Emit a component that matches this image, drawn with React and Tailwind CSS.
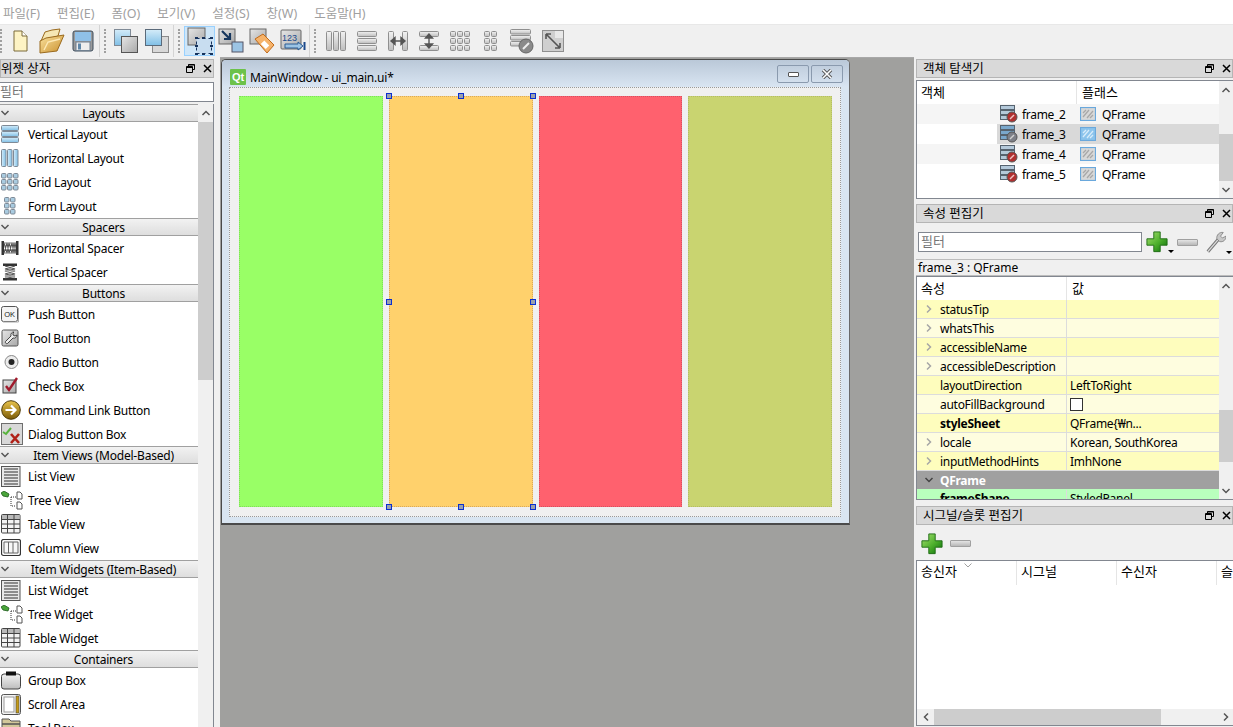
const font = { fontFamily: '"Noto Sans", "Noto Sans CJK KR", sans-serif' };

function Defs() {
  return (
    <svg className="block h-0 w-0">
      <defs>
        <linearGradient id="blueBar" x1="0" y1="0" x2="0" y2="1">
          <stop offset="0" stopColor="#d5ecf9" />
          <stop offset="1" stopColor="#7fbfe6" />
        </linearGradient>
        <linearGradient id="blueBarH" x1="0" y1="0" x2="1" y2="0">
          <stop offset="0" stopColor="#d5ecf9" />
          <stop offset="1" stopColor="#7fbfe6" />
        </linearGradient>
        <linearGradient id="grayBox" x1="0" y1="0" x2="1" y2="1">
          <stop offset="0" stopColor="#e6e6e6" />
          <stop offset="1" stopColor="#a8a8a8" />
        </linearGradient>
        <linearGradient id="grayBar" x1="0" y1="0" x2="0" y2="1">
          <stop offset="0" stopColor="#f2f2f2" />
          <stop offset="1" stopColor="#bdbdbd" />
        </linearGradient>
        <linearGradient id="gold" x1="0" y1="0" x2="0" y2="1">
          <stop offset="0" stopColor="#e9c34a" />
          <stop offset="1" stopColor="#7a5a08" />
        </linearGradient>
        <linearGradient id="folder" x1="0" y1="0" x2="1" y2="1">
          <stop offset="0" stopColor="#fbe3a0" />
          <stop offset="1" stopColor="#c98f2c" />
        </linearGradient>
        <linearGradient id="green" x1="0" y1="0" x2="1" y2="1">
          <stop offset="0" stopColor="#a8e070" />
          <stop offset="0.55" stopColor="#4caf2c" />
          <stop offset="1" stopColor="#0b6b0b" />
        </linearGradient>
      </defs>
    </svg>
  );
}

const Ico = ({ size = 18, w, h, vb = '0 0 18 18', children }) => (
  <svg width={w || size} height={h || size} viewBox={vb} className="block shrink-0">
    {children}
  </svg>
);

// palette icons
const VLayoutIcon = () => (
  <Ico>
    {[1, 7, 13].map((y) => (
      <rect key={y} x="0.5" y={y - 0.5} width="17" height="5" rx="1" fill="url(#blueBar)" stroke="#7f8a96" />
    ))}
  </Ico>
);
const HLayoutIcon = () => (
  <Ico>
    {[1, 7, 13].map((x) => (
      <rect key={x} x={x - 0.5} y="0.5" width="4.5" height="17" rx="1" fill="url(#blueBarH)" stroke="#7f8a96" />
    ))}
  </Ico>
);
const GridIcon = ({ cols = [1, 7, 13], rows = [1, 7, 13], fill = '#a9cbe0', stroke = '#7f8a96' }) => (
  <Ico>
    {rows.map((y) =>
      cols.map((x) => <rect key={x + '-' + y} x={x - 0.5} y={y - 0.5} width="4.5" height="4.5" rx="1" fill={fill} stroke={stroke} />)
    )}
  </Ico>
);
const SpringH = () => (
  <Ico>
    <rect x="0.5" y="2" width="2.5" height="14" fill="#333" />
    <rect x="15" y="2" width="2.5" height="14" fill="#333" />
    <path d="M3 4l3 10 2-10 3 10 2-10 2 10M3 14l3-10 2 10 3-10 2 10 2-10" fill="none" stroke="#555" strokeWidth="1.1" />
    <path d="M3 4h12M3 14h12" stroke="#777" />
  </Ico>
);
const SpringV = () => (
  <Ico>
    <rect x="2" y="0.5" width="14" height="2.5" fill="#333" />
    <rect x="2" y="15" width="14" height="2.5" fill="#333" />
    <path d="M4 3l10 3-10 2 10 3-10 2 10 2M14 3L4 6l10 2-10 3 10 2-10 2" fill="none" stroke="#555" strokeWidth="1.1" />
  </Ico>
);
const OkIcon = () => (
  <Ico>
    <rect x="0.5" y="1.5" width="16" height="15" rx="2" fill="#f4f4f4" stroke="#555" />
    <path d="M17.5 3v14H2" stroke="#aaa" fill="none" />
    <text x="8.5" y="12" textAnchor="middle" fontSize="7.5" fontFamily="Liberation Sans" fill="#222">OK</text>
  </Ico>
);
const ToolBtnIcon = () => (
  <Ico>
    <rect x="1" y="1" width="16" height="16" rx="1.5" fill="url(#grayBox)" stroke="#555" />
    <path d="M13 3a3 3 0 00-3 4L4.500 12.500a1.500 1.500 0 002 2L12 9a3 3 0 004-3l-2 1-2-1 0-2z" fill="#eee" stroke="#333" strokeWidth="0.9" />
  </Ico>
);
const RadioIcon = () => (
  <Ico>
    <circle cx="10.5" cy="9" r="6.5" fill="#ececec" stroke="#8a8a8a" />
    <circle cx="10.5" cy="9" r="3" fill="#222" />
  </Ico>
);
const CheckIcon = () => (
  <Ico>
    <rect x="2" y="3" width="13" height="13" fill="url(#grayBox)" stroke="#444" />
    <path d="M5 9l3 4 8-12" fill="none" stroke="#a01a2c" strokeWidth="2.4" />
  </Ico>
);
const LinkIcon = () => (
  <Ico w={20} h={20} vb="0 0 20 20">
    <circle cx="10" cy="10" r="9.3" fill="url(#gold)" stroke="#4d3a06" />
    <path d="M4.500 10h9M10 5.500l4.500 4.500-4.500 4.500" fill="none" stroke="#fff" strokeWidth="2.2" />
  </Ico>
);
const DialogIcon = () => (
  <Ico w={22} h={22} vb="0 0 22 22">
    <rect x="0.5" y="0.5" width="21" height="21" fill="#d8d8d8" stroke="#6e6e6e" />
    <path d="M2 9l3 2 5-6" fill="none" stroke="#57b33c" strokeWidth="2" />
    <path d="M10 11l8 9M18 11l-8 9" stroke="#b02018" strokeWidth="2.6" />
  </Ico>
);
const ListIcon = () => (
  <Ico w={20} h={21} vb="0 0 20 21">
    <rect x="0.5" y="0.5" width="18.5" height="20" fill="#e8e8e8" stroke="#555" />
    {[3, 6, 9, 12, 15, 18].map((y) => (
      <rect key={y} x="3" y={y - 1} width="14" height="2" fill="#8c8c8c" />
    ))}
  </Ico>
);
const TreeIcon = () => (
  <Ico w={22} h={19} vb="0 0 22 19">
    <path d="M0 2l3-2 5 3-1 3-5-1z" fill="#4aa53a" stroke="#1d5a1a" strokeWidth="0.8" />
    <path d="M10 6h5M10 6v9h5" fill="none" stroke="#333" strokeDasharray="1 1" />
    <path d="M16 1h3l2 2v5h-5zM16 11h3l2 2v5h-5z" fill="#fff" stroke="#555" />
  </Ico>
);
const TableIcon = () => (
  <Ico w={20} h={20} vb="0 0 20 20">
    <rect x="0.5" y="0.5" width="18.5" height="18.5" rx="1" fill="#f3f3f3" stroke="#444" />
    <rect x="1" y="1" width="17.5" height="4" fill="#b9b9b9" />
    <path d="M1 5.500h18M1 10h18M1 14.500h18M6.500 1v18M13 1v18" stroke="#444" />
  </Ico>
);
const ColumnIcon = () => (
  <Ico w={20} h={18} vb="0 0 20 18">
    <rect x="0.5" y="0.5" width="19" height="16" rx="2" fill="#f7f7f7" stroke="#333" strokeWidth="1.2" />
    <path d="M3 3v11h14V3zM7.500 3v11M12 3v11" fill="none" stroke="#666" />
  </Ico>
);
const GroupIcon = () => (
  <Ico w={20} h={19} vb="0 0 20 19">
    <rect x="0.5" y="3" width="19" height="15" rx="2.5" fill="url(#grayBar)" stroke="#444" />
    <rect x="5" y="0.5" width="10" height="4" fill="#111" />
  </Ico>
);
const ScrollIcon = () => (
  <Ico w={20} h={21} vb="0 0 20 21">
    <rect x="0.5" y="0.5" width="19" height="20" rx="2" fill="#f4f4f4" stroke="#555" />
    <rect x="3" y="3" width="10" height="15" fill="#fff" stroke="#999" />
    <rect x="15" y="2" width="3" height="17" fill="#c49a18" stroke="#444" strokeWidth="0.6" />
  </Ico>
);
const ToolBoxIcon = () => (
  <Ico w={20} h={20} vb="0 0 20 20">
    <path d="M1 1h7l2 2h9v3H1zM1 6h18v4H1zM1 10h18v8H1z" fill="#d2c79a" stroke="#555" />
  </Ico>
);

const palette = [
  { title: 'Layouts', items: [['Vertical Layout', VLayoutIcon], ['Horizontal Layout', HLayoutIcon], ['Grid Layout', GridIcon], ['Form Layout', () => <GridIcon cols={[4, 10]} />]] },
  { title: 'Spacers', items: [['Horizontal Spacer', SpringH], ['Vertical Spacer', SpringV]] },
  { title: 'Buttons', items: [['Push Button', OkIcon], ['Tool Button', ToolBtnIcon], ['Radio Button', RadioIcon], ['Check Box', CheckIcon], ['Command Link Button', LinkIcon], ['Dialog Button Box', DialogIcon]] },
  { title: 'Item Views (Model-Based)', items: [['List View', ListIcon], ['Tree View', TreeIcon], ['Table View', TableIcon], ['Column View', ColumnIcon]] },
  { title: 'Item Widgets (Item-Based)', items: [['List Widget', ListIcon], ['Tree Widget', TreeIcon], ['Table Widget', TableIcon]] },
  { title: 'Containers', items: [['Group Box', GroupIcon], ['Scroll Area', ScrollIcon], ['Tool Box', ToolBoxIcon]] },
];

// toolbar icons
const NewIcon = () => (
  <Ico w={15} h={22} vb="0 0 15 22">
    <path d="M1 1h8l5 5v15H1z" fill="#fdf3c4" stroke="#7a6a3a" />
    <path d="M9 1v5h5" fill="#fff" stroke="#7a6a3a" />
  </Ico>
);
const OpenIcon = () => (
  <Ico w={26} h={26} vb="0 0 26 26">
    <path d="M2 13l4-9 7-2 8-1-2 7z" fill="#f6e7b4" stroke="#9a6a1e" />
    <path d="M1 25V13l6-3 18-3-7 16z" fill="url(#folder)" stroke="#9a6a1e" />
    <path d="M5 22l4-8 12-3" fill="none" stroke="#fde9b6" strokeWidth="1.4" />
  </Ico>
);
const SaveIcon = () => (
  <Ico w={22} h={22} vb="0 0 22 22">
    <rect x="1" y="1" width="20" height="20" rx="2" fill="#9a9a9a" stroke="#3c4c5c" />
    <rect x="3" y="2" width="16" height="9" fill="#8fc0e8" />
    <rect x="4" y="12" width="14" height="8.5" fill="#eeeeee" stroke="#6f7f8f" />
    <rect x="6" y="13.5" width="3" height="6" fill="#5e86a8" />
  </Ico>
);
const StackIcon = ({ front }) => (
  <Ico w={26} h={26} vb="0 0 26 26">
    {front ? (
      <>
        <rect x="8.5" y="8.5" width="16" height="16" fill="#d8d8d8" stroke="#8a8a8a" />
        <rect x="1.5" y="1.5" width="16" height="16" fill="url(#blueBar)" stroke="#5a6a7a" />
      </>
    ) : (
      <>
        <rect x="1.5" y="1.5" width="16" height="16" fill="url(#blueBar)" stroke="#7f8a96" />
        <rect x="8.5" y="8.5" width="16" height="16" fill="url(#grayBox)" stroke="#555" />
      </>
    )}
  </Ico>
);
const EditWidgetsIcon = () => (
  <Ico w={26} h={28} vb="0 0 26 28">
    <rect x="1" y="1" width="17" height="17" fill="url(#grayBox)" stroke="#666" />
    <rect x="9.5" y="11.5" width="15" height="15" fill="#c8ddf0" stroke="#16325c" strokeDasharray="3 3" />
    {[[8, 10], [15, 10], [23, 10], [8, 18], [23, 18], [8, 26], [15, 26], [23, 26]].map(([x, y]) => (
      <rect key={x + '-' + y} x={x} y={y} width="3" height="2" fill="#16325c" />
    ))}
  </Ico>
);
const SignalIcon = () => (
  <Ico w={26} h={26} vb="0 0 26 26">
    <rect x="1" y="1" width="16" height="15" fill="url(#grayBox)" stroke="#666" />
    <rect x="14" y="14" width="11" height="10" fill="#9cc4e4" stroke="#556" />
    <path d="M4 3l8 8M12 5v6H6" fill="none" stroke="#17375e" strokeWidth="2.2" />
  </Ico>
);
const BuddyIcon = () => (
  <Ico w={26} h={26} vb="0 0 26 26">
    <rect x="1" y="1" width="16" height="15" fill="url(#grayBox)" stroke="#666" />
    <path d="M6 11l8-5 11 11-7 8z" fill="#f6b36a" stroke="#c06a1a" />
    <rect x="13" y="14" width="7" height="5" fill="#fff" transform="rotate(45 16 16)" />
  </Ico>
);
const TabOrderIcon = () => (
  <Ico w={26} h={24} vb="0 0 26 24">
    <rect x="1" y="1" width="20" height="19" rx="1" fill="url(#grayBox)" stroke="#666" />
    <text x="2" y="12" fontSize="9" fontFamily="Liberation Sans" fill="#1c4a8c">123</text>
    <path d="M5 15h13v-2l5 4-5 4v-2H5z" fill="#9cc4e4" stroke="#2c5c94" />
    <rect x="23.5" y="13" width="2" height="8" fill="#1c4a8c" />
  </Ico>
);

const g = { fill: 'url(#grayBar)', stroke: '#8f8f8f' };
const GrayCols = () => (
  <Ico w={20} h={20} vb="0 0 20 20">
    {[0.5, 7.5, 14.5].map((x) => <rect key={x} x={x} y="0.5" width="5" height="19" rx="1" {...g} />)}
  </Ico>
);
const GrayRows = () => (
  <Ico w={20} h={20} vb="0 0 20 20">
    {[0.5, 7.5, 14.5].map((y) => <rect key={y} x="0.5" y={y} width="19" height="5" rx="1" {...g} />)}
  </Ico>
);
const GraySplitH = () => (
  <Ico w={20} h={20} vb="0 0 20 20">
    <rect x="0.5" y="0.5" width="5" height="19" rx="1" {...g} />
    <rect x="14.5" y="0.5" width="5" height="19" rx="1" {...g} />
    <path d="M3 10h14M3 10l4-3.500v7zM17 10l-4-3.500v7z" fill="#555" stroke="#555" strokeWidth="1.4" />
  </Ico>
);
const GraySplitV = () => (
  <Ico w={20} h={20} vb="0 0 20 20">
    <rect x="0.5" y="0.5" width="19" height="5" rx="1" {...g} />
    <rect x="0.5" y="14.5" width="19" height="5" rx="1" {...g} />
    <path d="M10 3v14M10 3L6.500 7h7zM10 17l-3.500-4h7z" fill="#555" stroke="#555" strokeWidth="1.4" />
  </Ico>
);
const GraySquares = ({ cols }) => (
  <Ico w={20} h={20} vb="0 0 20 20">
    {[0.5, 7.5, 14.5].map((y) => cols.map((x) => <rect key={x + '-' + y} x={x} y={y} width="5" height="5" rx="1" {...g} />))}
  </Ico>
);
const BreakIcon = () => (
  <Ico w={24} h={25} vb="0 0 24 25">
    {[0.5, 6.5, 12.5].map((y) => <rect key={y} x="0.5" y={y} width="20" height="4.5" rx="1" {...g} />)}
    <circle cx="16" cy="17" r="7" fill="#8a8a8a" stroke="#666" />
    <path d="M13 20l6-6" stroke="#eee" strokeWidth="2" />
  </Ico>
);
const AdjustIcon = () => (
  <Ico w={22} h={22} vb="0 0 22 22">
    <rect x="0.5" y="0.5" width="21" height="21" fill="#cfcfcf" stroke="#8f8f8f" />
    <rect x="13" y="1" width="8" height="7" fill="#e8e8e8" />
    <path d="M4 4l14 14M4 4h5M4 4v5M18 18h-5M18 18v-5" fill="none" stroke="#555" strokeWidth="1.6" />
  </Ico>
);

const ToolBtn = ({ active, children }) => (
  <div className={`flex h-[30px] w-[31px] items-center justify-center border ${active ? 'border-[#99d1ff] bg-[#cfe6f8]' : 'border-transparent'}`}>
    {children}
  </div>
);

function ToolGroup({ first, items, activeIndex, last }) {
  return (
    <div className={`flex h-full items-center ${first ? 'pl-0' : 'pl-[4px]'} pr-[1px] ${last ? '' : 'border-r border-[#d4d4d4]'}`}>
      <div className={`h-[24px] w-[2px] border-l-2 border-dotted border-[#a0a0a0] ${first ? 'mr-[3px]' : 'mr-[4px]'}`} />
      {items.map((It, i) => (
        <ToolBtn key={i} active={i === activeIndex}>
          <It />
        </ToolBtn>
      ))}
    </div>
  );
}

const FloatIcon = () => (
  <Ico w={9} h={9} vb="0 0 9 9">
    <path d="M2.500 2.500V.5h6v5h-2M.5 2.500h6v6h-6z" fill="none" stroke="#000" />
    <path d="M2.500 1h6M.5 3.500h6" stroke="#000" />
  </Ico>
);
const CloseIcon = () => (
  <Ico w={9} h={9} vb="0 0 9 9">
    <path d="M1 1l7 7M8 1L1 8" stroke="#000" strokeWidth="1.5" />
  </Ico>
);

function DockTitle({ children, pad = 'pl-[6px]' }) {
  return (
    <div className={`flex h-[19px] shrink-0 items-center justify-between border border-[#b5b5b5] bg-[#d9d9d9] text-[12.5px] ${pad}`}>
      <span className="pt-[2px] leading-none">{children}</span>
      <div className="flex items-center gap-[8px] pr-[1px]">
        <FloatIcon />
        <CloseIcon />
      </div>
    </div>
  );
}

const Chevron = ({ dir = 'down', color = '#555' }) => (
  <svg width="10" height="8" viewBox="0 0 10 8" className="block shrink-0">
    <path d={dir === 'down' ? 'M1.500 2L5 5.500 8.500 2' : 'M1.500 6L5 2.500 8.500 6'} fill="none" stroke={color} strokeWidth="1.5" />
  </svg>
);
const ChevronSide = ({ dir = 'right', color = '#a6a6a6' }) => (
  <svg width="8" height="10" viewBox="0 0 8 10" className="block shrink-0">
    <path d={dir === 'right' ? 'M2 1.500L5.500 5 2 8.500' : 'M6 1.500L2.500 5 6 8.500'} fill="none" stroke={color} strokeWidth="1.5" />
  </svg>
);

function VScroll({ top, thumb, width = 'w-[14px]' }) {
  return (
    <div className={`flex h-full shrink-0 flex-col bg-[#f0f0f0] ${width}`}>
      <div className="flex h-[17px] shrink-0 items-center justify-center">
        <Chevron dir="up" />
      </div>
      <div className="flex-1">
        <div className={`${top} ${thumb} bg-[#cdcdcd]`} />
      </div>
      <div className="flex h-[17px] shrink-0 items-center justify-center">
        <Chevron />
      </div>
    </div>
  );
}

function WidgetBox() {
  return (
    <div className="flex w-[216px] shrink-0 flex-col pr-[2px] pt-[2px]">
      <DockTitle pad="pl-0">위젯 상자</DockTitle>
      <div className="mt-[4px] flex h-[20px] shrink-0 items-center border border-l-0 border-[#828790] bg-white text-[13px] text-[#757575]">필터</div>
      <div className="mt-[2px] flex min-h-0 flex-1 border-r border-[#828790] bg-white">
        <div className="min-w-0 flex-1">
          {palette.map((cat) => (
            <div key={cat.title}>
              <div className="flex h-[18px] items-center border-y border-[#a0a0a0] bg-gradient-to-b from-[#f2f2f2] to-[#dedede] text-[12px] leading-none tracking-[-0.2px]">
                <span className="w-[9px]"><Chevron /></span>
                <span className="flex-1 pt-[2px] text-center">{cat.title}</span>
              </div>
              {cat.items.map(([name, Icon]) => (
                <div key={name} className="flex h-[24px] items-center text-[12px] tracking-[-0.24px]">
                  <span className="flex w-[28px] shrink-0 items-center pl-[1px]"><Icon /></span>
                  <span className="pt-[2px]">{name}</span>
                </div>
              ))}
            </div>
          ))}
        </div>
        <div className="flex w-[15px] shrink-0 flex-col bg-[#f0f0f0]">
          <div className="flex h-[18px] shrink-0 items-center justify-center"><Chevron dir="up" /></div>
          <div className="h-[258px] bg-[#cdcdcd]" />
        </div>
      </div>
    </div>
  );
}

function Handles() {
  const cls = 'absolute h-[6px] w-[6px] border border-[#0a2fd0] bg-[#9aa0ac]';
  return (
    <>
      <div className={`${cls} -left-[4px] -top-[4px]`} />
      <div className={`${cls} left-1/2 -top-[4px] -translate-x-1/2`} />
      <div className={`${cls} -right-[4px] -top-[4px]`} />
      <div className={`${cls} -left-[4px] top-1/2 -translate-y-1/2`} />
      <div className={`${cls} -right-[4px] top-1/2 -translate-y-1/2`} />
      <div className={`${cls} -left-[4px] -bottom-[4px]`} />
      <div className={`${cls} left-1/2 -bottom-[4px] -translate-x-1/2`} />
      <div className={`${cls} -right-[4px] -bottom-[4px]`} />
    </>
  );
}

function FormWindow() {
  return (
    <div className="flex h-[466px] w-[629px] flex-col rounded-t-[5px] border border-b-2 border-[#4a4a4a] border-r-[#6a6a6a] bg-[#d9e5f1]">
      <div className="flex h-[27px] shrink-0 rounded-t-[4px] bg-gradient-to-b from-[#bac8d8] to-[#d9e5f2] pl-[8px] pr-[6px]">
        <div className="mt-[9px] flex h-[16px] w-[16px] items-center justify-center rounded-[1px] bg-[#6cc24a] text-[11px] font-bold leading-none text-white" style={{ fontFamily: 'Liberation Sans' }}>Qt</div>
        <span className="ml-[4px] mt-[9px] flex-1 text-[12px] tracking-[-0.2px]">MainWindow - ui_main.ui*</span>
        <div className="flex gap-[2px] pt-[5px]">
          <div className="flex h-[18px] w-[32px] items-center justify-center rounded-[2px] border border-[#8a9aae]">
            <div className="h-[5px] w-[11px] rounded-[1px] border border-[#555] bg-white" />
          </div>
          <div className="flex h-[18px] w-[32px] items-center justify-center rounded-[2px] border border-[#8a9aae]">
            <svg width="12" height="10" viewBox="0 0 12 10"><path d="M2 1l8 8M10 1L2 9" stroke="#555" strokeWidth="3.4" /><path d="M2 1l8 8M10 1L2 9" stroke="#fff" strokeWidth="1.6" /></svg>
          </div>
        </div>
      </div>
      <div className="ml-[7px] mr-[8px] flex h-[430px] gap-[6px] border border-dotted border-[#9a9a9a] bg-[#f0f0f0] pb-[9px] pl-[9px] pr-[8px] pt-[8px]">
        <div className="flex-1 border border-dotted border-[#7fdc5c] bg-[#99ff66]" />
        <div className="relative flex-1 border border-dotted border-[#d8a85c] bg-[#ffd16c]">
          <Handles />
        </div>
        <div className="flex-1 border border-dotted border-[#d85060] bg-[#ff616e]" />
        <div className="flex-1 border border-dotted border-[#b4bc64] bg-[#c9d470]" />
      </div>
    </div>
  );
}

const LayoutBadgeIcon = ({ selected }) => (
  <Ico w={18} h={18} vb="0 0 18 18">
    {[0.5, 5.5, 10.5].map((y) => (
      <rect key={y} x="0.5" y={y} width="14" height="4" fill={selected ? '#7aa8cc' : '#b4c9da'} stroke="#56636f" />
    ))}
    <circle cx="12" cy="12" r="5" fill={selected ? '#7d8088' : '#b03030'} stroke="#555" />
    <path d="M10 14l4-4" stroke={selected ? '#d0d0d0' : '#f0c0c0'} strokeWidth="1.4" />
  </Ico>
);
const FrameIcon = ({ selected }) => (
  <Ico w={16} h={14} vb="0 0 16 14">
    <rect x="0.5" y="0.5" width="15" height="13" fill={selected ? '#8cc4ec' : '#d8d8d8'} stroke="#6aa8dc" strokeWidth="1.2" />
    <path d="M3 10l6-7M7 11l6-7M3 6l3-3M10 11l3-3" stroke={selected ? '#d8ecfa' : '#a8a8a8'} strokeWidth="1.3" />
  </Ico>
);

function ObjectInspector() {
  const rows = [
    ['frame_2', 'bg-[#f5f5f5]'],
    ['frame_3', 'bg-white', true],
    ['frame_4', 'bg-[#f5f5f5]'],
    ['frame_5', 'bg-white'],
  ];
  return (
    <div className="mt-[2px] flex h-[119px] shrink-0 overflow-hidden border border-r-0 border-[#828790] bg-white text-[12px] tracking-[-0.3px]">
      <div className="min-w-0 flex-1">
        <div className="flex h-[23px] items-center text-[13px] tracking-normal">
          <div className="h-full w-[160px] border-r border-[#e5e5e5] pl-[4px] leading-[22px]">객체</div>
          <div className="pl-[5px]">플래스</div>
        </div>
        {rows.map(([name, bg, sel]) => (
          <div key={name} className={`flex h-[20px] items-center ${bg}`}>
            <div className="w-[80px] shrink-0" />
            <div className={`flex h-full flex-1 items-center ${sel ? 'bg-[#d9d9d9]' : ''}`}>
              <div className="flex w-[83px] shrink-0 items-center gap-[4px] pl-[3px]">
                <LayoutBadgeIcon selected={sel} />
                <span className="pt-[2px]">{name}</span>
              </div>
              <div className="flex items-center gap-[6px]">
                <FrameIcon selected={sel} />
                <span className="pt-[2px]">QFrame</span>
              </div>
            </div>
          </div>
        ))}
      </div>
      <VScroll top="mt-[36px]" thumb="h-[47px]" />
    </div>
  );
}

const PlusIcon = () => (
  <svg width="22" height="22" viewBox="0 0 24 24" className="block shrink-0">
    <path d="M8.500 1h7v7.500H23v7h-7.500v7h-7v-7H1v-7h7.500z" fill="url(#green)" stroke="#1e6b14" strokeWidth="1" />
  </svg>
);
const MinusIcon = () => <div className="h-[7px] w-[21px] rounded-[1px] border border-[#a0a0a0] bg-gradient-to-b from-[#e4e4e4] to-[#b8b8b8]" />;
const WrenchIcon = () => (
  <svg width="20" height="23" viewBox="0 0 22 24" className="block shrink-0">
    <path d="M2 22L14 8" stroke="#777" strokeWidth="3.6" />
    <path d="M2 22L14 8" stroke="#ddd" strokeWidth="1.4" />
    <path d="M19 1l-3 4 2 2 4-2c0 4-3 7-7 6l-3-3c-1-4 3-8 7-7z" fill="#c8c8c8" stroke="#777" strokeWidth="0.8" />
  </svg>
);
const DownTick = () => <div className="h-0 w-0 self-end border-x-[3px] border-t-[3px] border-x-transparent border-t-black" />;

const props = [
  ['statusTip', '', 'a', true],
  ['whatsThis', '', 'b', true],
  ['accessibleName', '', 'a', true],
  ['accessibleDescription', '', 'b', true],
  ['layoutDirection', 'LeftToRight', 'a'],
  ['autoFillBackground', 'check', 'b'],
  ['styleSheet', 'QFrame{₩n...', 'a', false, true],
  ['locale', 'Korean, SouthKorea', 'b', true],
  ['inputMethodHints', 'ImhNone', 'a', true],
];

function PropertyEditor() {
  return (
    <>
      <div className="mt-[8px] flex h-[22px] shrink-0 items-center">
        <div className="ml-[2px] flex h-[20px] w-[224px] shrink-0 items-center border border-[#828790] bg-white pl-[2px] text-[13px] text-[#757575]">필터</div>
        <div className="ml-[4px] flex shrink-0 items-end"><PlusIcon /><DownTick /></div>
        <div className="ml-[3px] shrink-0"><MinusIcon /></div>
        <div className="ml-[8px] flex shrink-0 items-end"><WrenchIcon /><DownTick /></div>
      </div>
      <div className="mt-[6px] flex h-[17px] shrink-0 items-center border-y border-[#bcbcbc] pl-[2px] text-[12px]">frame_3 : QFrame</div>
      <div className="flex h-[224px] shrink-0 overflow-hidden border-b border-l border-t border-[#828790] bg-white text-[12px] tracking-[-0.28px]">
        <div className="min-w-0 flex-1">
          <div className="flex h-[23px] items-center text-[13px] tracking-normal">
            <div className="flex h-full w-[150px] items-center border-r border-[#e5e5e5] pl-[4px]">속성</div>
            <div className="pl-[5px]">값</div>
          </div>
          {props.map(([name, val, tone, arrow, bold]) => (
            <div key={name} className={`flex h-[19px] items-center border-b border-[#dcdcdc] ${tone === 'a' ? 'bg-[#fefdbd]' : 'bg-[#fefddf]'}`}>
              <div className="flex h-full w-[150px] shrink-0 items-center border-r border-[#dcdcdc]">
                <span className="flex w-[23px] shrink-0 justify-center pl-[1px]">{arrow && <ChevronSide />}</span>
                <span className={`pt-[2px] ${bold ? 'font-bold' : ''}`}>{name}</span>
              </div>
              <div className="pl-[3px]">
                {val === 'check' ? <div className="h-[13px] w-[13px] border border-[#333] bg-white" /> : <span className="block pt-[2px]">{val}</span>}
              </div>
            </div>
          ))}
          <div className="flex h-[18px] items-center bg-[#a0a0a0] font-bold text-white">
            <span className="flex w-[23px] shrink-0 justify-center pl-[1px]"><Chevron color="#444" /></span>
            <span className="pt-[2px]">QFrame</span>
          </div>
          <div className="flex h-[19px] bg-[#b9ffbd] pt-[1px]">
            <div className="flex w-[150px] shrink-0 border-r border-[#dcdcdc] pl-[23px] font-bold">frameShape</div>
            <div className="pl-[3px]">StyledPanel</div>
          </div>
        </div>
        <VScroll top="mt-[116px]" thumb="h-[52px]" />
      </div>
    </>
  );
}

function SignalEditor() {
  const cols = [['송신자', 'w-[100px]'], ['시그널', 'w-[100px]'], ['수신자', 'w-[100px]'], ['슬', 'flex-1']];
  return (
    <>
      <div className="flex h-[35px] shrink-0 items-center gap-[7px] pl-[5px] pt-[2px]">
        <PlusIcon />
        <MinusIcon />
      </div>
      <div className="flex h-[166px] shrink-0 flex-col border border-r-0 border-[#828790] bg-white text-[13px]">
        <div className="relative flex h-[24px] shrink-0 items-center">
          {cols.map(([c, w]) => (
            <div key={c} className={`flex h-full items-center pb-[2px] pl-[4px] ${w} ${c === '슬' ? '' : 'border-r border-[#e5e5e5]'}`}>{c}</div>
          ))}
          <div className="absolute left-[47px] top-[2px]">
            <svg width="8" height="5" viewBox="0 0 8 5" className="block"><path d="M.5.5L4 4 7.500.5" fill="none" stroke="#a0a0a0" /></svg>
          </div>
        </div>
        <div className="flex-1" />
        <div className="flex h-[16px] shrink-0 items-center bg-[#f0f0f0]">
          <div className="flex w-[17px] shrink-0 justify-center"><ChevronSide dir="left" color="#555" /></div>
          <div className="h-full w-[227px] bg-[#cdcdcd]" />
          <div className="flex flex-1 justify-end pr-[3px]"><ChevronSide color="#555" /></div>
        </div>
      </div>
    </>
  );
}

export default function App() {
  const menus = ['파일(F)', '편집(E)', '폼(O)', '보기(V)', '설정(S)', '창(W)', '도움말(H)'];
  return (
    <div className="flex h-[727px] w-[1233px] flex-col overflow-hidden bg-[#f0f0f0] text-black" style={font}>
      <Defs />
      <div className="flex h-[24px] shrink-0 items-center gap-[17px] bg-white pl-[3px] pt-[4px] text-[12.5px] text-[#a0a0a0]">
        {menus.map((m) => <span key={m}>{m}</span>)}
      </div>
      <div className="flex h-[33px] shrink-0 items-center border-t border-[#e8e8e8]">
        <ToolGroup first items={[NewIcon, OpenIcon, SaveIcon]} />
        <ToolGroup items={[() => <StackIcon />, () => <StackIcon front />]} />
        <ToolGroup items={[EditWidgetsIcon, SignalIcon, BuddyIcon, TabOrderIcon]} activeIndex={0} />
        <ToolGroup
          last
          items={[GrayCols, GrayRows, GraySplitH, GraySplitV, () => <GraySquares cols={[0.5, 7.5, 14.5]} />, () => <GraySquares cols={[3.5, 10.5]} />, BreakIcon, AdjustIcon]}
        />
      </div>
      <div className="flex min-h-0 flex-1">
        <WidgetBox />
        <div className="ml-[4px] min-w-0 flex-1 border-t border-[#a8a8a8] bg-[#a0a09e] pl-[1px] pt-[1px]">
          <FormWindow />
        </div>
        <div className="ml-[2px] flex w-[317px] shrink-0 flex-col pt-[2px]">
          <DockTitle>객체 탐색기</DockTitle>
          <ObjectInspector />
          <div className="mt-[5px]"><DockTitle>속성 편집기</DockTitle></div>
          <PropertyEditor />
          <div className="mt-[6px]"><DockTitle>시그널/슬롯 편집기</DockTitle></div>
          <SignalEditor />
        </div>
      </div>
    </div>
  );
}
